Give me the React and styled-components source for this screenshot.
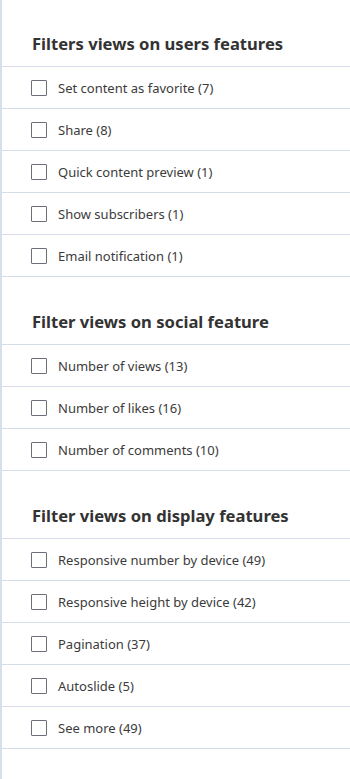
import React from 'react';
import styled, { createGlobalStyle } from 'styled-components';

const GlobalStyle = createGlobalStyle`
  html, body {
    margin: 0;
    padding: 0;
    background: #ffffff;
  }
  body {
    font-family: "Noto Sans", "Open Sans", sans-serif;
    color: #333333;
  }
`;

const Panel = styled.aside`
  width: 350px;
  min-height: 779px;
  box-sizing: border-box;
  border-left: 2px solid #d8dfec;
  background: #ffffff;
`;

const Section = styled.section`
  & + & {
    margin-top: 1px;
  }
`;

const Heading = styled.h3`
  margin: 0;
  height: 67px;
  box-sizing: border-box;
  padding: 31px 12px 0 30px;
  font-size: 16.6px;
  line-height: 26px;
  font-weight: 700;
  color: #333333;
  border-bottom: 1px solid #d5dcea;
`;

const List = styled.ul`
  list-style: none;
  margin: 0;
  padding: 0;
`;

const Row = styled.li`
  height: 42px;
  box-sizing: border-box;
  border-bottom: 1px solid #d5dcea;
  display: flex;
  align-items: center;
  padding-left: 29px;
`;

const Label = styled.label`
  display: flex;
  align-items: center;
  gap: 11px;
  font-size: 13px;
  color: #3b3b3b;
  cursor: pointer;
`;

const Box = styled.input.attrs({ type: 'checkbox' })`
  appearance: none;
  margin: 0;
  width: 16px;
  height: 16px;
  box-sizing: border-box;
  border: 1px solid #6b6f78;
  border-radius: 1px;
  background: #ffffff;
  cursor: pointer;
`;

const sections = [
  {
    title: 'Filters views on users features',
    items: [
      'Set content as favorite (7)',
      'Share (8)',
      'Quick content preview (1)',
      'Show subscribers (1)',
      'Email notification (1)',
    ],
  },
  {
    title: 'Filter views on social feature',
    items: ['Number of views (13)', 'Number of likes (16)', 'Number of comments (10)'],
  },
  {
    title: 'Filter views on display features',
    items: [
      'Responsive number by device (49)',
      'Responsive height by device (42)',
      'Pagination (37)',
      'Autoslide (5)',
      'See more (49)',
    ],
  },
];

export default function App() {
  return (
    <>
      <GlobalStyle />
      <Panel>
        {sections.map((section) => (
          <Section key={section.title}>
            <Heading>{section.title}</Heading>
            <List>
              {section.items.map((item) => (
                <Row key={item}>
                  <Label>
                    <Box />
                    {item}
                  </Label>
                </Row>
              ))}
            </List>
          </Section>
        ))}
      </Panel>
    </>
  );
}
